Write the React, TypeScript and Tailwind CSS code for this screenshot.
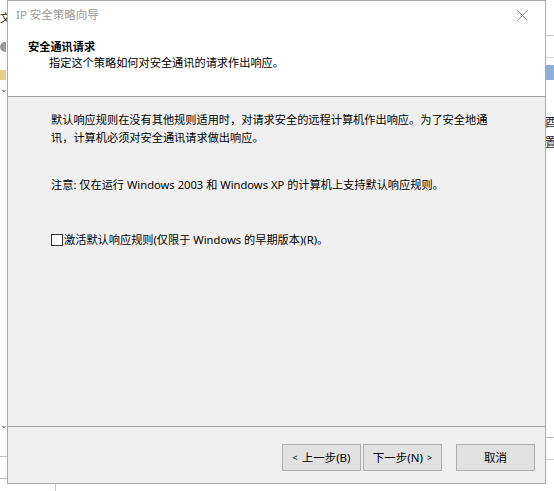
import React from "react";

const font = { fontFamily: '"Noto Sans", "Noto Sans CJK SC", sans-serif' };

const Backdrop = () => (
  <>
    {/* left window fragment */}
    <div className="absolute left-0 top-0 w-[7px] h-[491px] bg-white flex flex-col overflow-hidden">
      <div className="mt-[12px] text-[11px] leading-none text-[#222]">文</div>
      <div className="mt-[19px] w-[6px] h-[10px] bg-[#9a9a9a] rounded-l-full" />
      <div className="mt-[18px] w-[6px] h-[10px] bg-[#e9d08a]" />
      <div className="mt-[4px] text-[9px] leading-none text-[#444]">⌄</div>
      <div className="mt-[327px] text-[9px] leading-none text-[#444]">⌄</div>
      <div className="mt-[27px] h-px bg-[#bdbdbd]" />
      <div className="mt-[21px] h-px bg-[#bdbdbd]" />
    </div>
    {/* right window fragment */}
    <div className="absolute right-0 top-0 w-[9px] h-[491px] bg-white flex flex-col overflow-hidden">
      <div className="mt-[35px] h-px bg-[#c8c8c8]" />
      <div className="mt-[21px] h-px bg-[#d8d8d8]" />
      <div className="mt-[7px] h-[15px] bg-[#8fb1d8]" />
      <div className="mt-[33px] text-[12px] leading-[20px] text-[#222] whitespace-nowrap">酉</div>
      <div className="text-[12px] leading-[20px] text-[#222] whitespace-nowrap">置</div>
      <div className="mt-[284px] h-px bg-[#bdbdbd]" />
      <div className="mt-[21px] h-px bg-[#d0d0d0]" />
    </div>
    {/* bottom fragment */}
    <div className="absolute left-[55px] top-[484px] w-px h-[7px] bg-[#c8c8c8]" />
  </>
);

const WizardButton = ({ children }: { children: React.ReactNode }) => (
  <button className="w-[79px] h-[27px] bg-[#e1e1e1] border border-[#adadad] text-[11.5px] text-black flex items-center justify-center">
    {children}
  </button>
);

const App = () => {
  return (
    <div className="relative w-[554px] h-[491px] bg-white overflow-hidden text-black" style={font}>
      <Backdrop />

      <div className="absolute left-[7px] top-0 w-[539px] h-[484px] border border-[#a9a9a9] flex flex-col bg-[#f0f0f0]">
        {/* title bar + header */}
        <div className="bg-white h-[96px] flex flex-col border-b border-[#a0a0a0]">
          <div className="h-[28px] flex items-center justify-between pl-[8px] pr-[17px]">
            <span className="text-[11.5px] text-[#9a9a9a]">IP 安全策略向导</span>
            <svg width="11" height="11" viewBox="0 0 11 11" className="text-[#8a8a8a]">
              <path d="M0.5 0.5 L10.5 10.5 M10.5 0.5 L0.5 10.5" stroke="currentColor" strokeWidth="1" fill="none" />
            </svg>
          </div>
          <div className="pl-[20px] pt-[10px] flex flex-col text-[11.2px] leading-[16px]">
            <span className="font-bold">安全通讯请求</span>
            <span className="pl-[21px]">指定这个策略如何对安全通讯的请求作出响应。</span>
          </div>
        </div>

        {/* body */}
        <div className="flex-1 pl-[43px] pt-[14px] text-[11.2px] leading-[18px] border-b border-[#a0a0a0]">
          <p>
            默认响应规则在没有其他规则适用时，对请求安全的远程计算机作出响应。为了安全地通
            <br />
            讯，计算机必须对安全通讯请求做出响应。
          </p>
          <p className="mt-[29px]">注意: 仅在运行 Windows 2003 和 Windows XP 的计算机上支持默认响应规则。</p>
          <label className="mt-[37px] flex items-center">
            <span className="w-[12px] h-[12px] border border-[#333] bg-white mr-px" />
            <span>激活默认响应规则(仅限于 Windows 的早期版本)(R)。</span>
          </label>
        </div>

        {/* footer */}
        <div className="h-[56px] flex items-start justify-end pt-[17px] pr-[10px]">
          <div className="flex gap-[2px]">
            <WizardButton>
              <span className="text-[9px] mr-[4px]">&lt;</span>上一步(B)
            </WizardButton>
            <WizardButton>
              下一步(N)<span className="text-[9px] ml-[4px]">&gt;</span>
            </WizardButton>
          </div>
          <div className="ml-[14px]">
            <WizardButton>取消</WizardButton>
          </div>
        </div>
      </div>
    </div>
  );
};

export default App;
